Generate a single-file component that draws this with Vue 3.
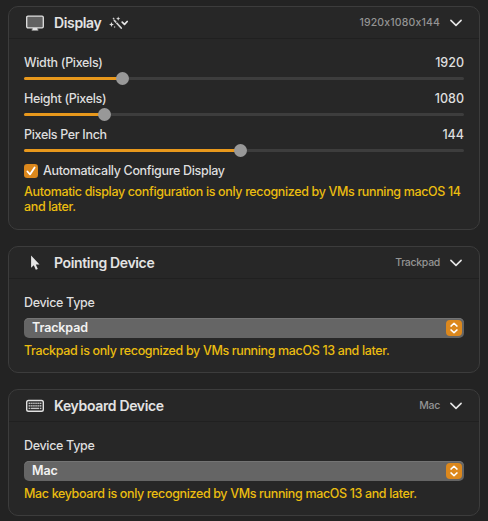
<script setup>
const sliders = [
  { label: 'Width (Pixels)', value: 1920, fill: 22.3 },
  { label: 'Height (Pixels)', value: 1080, fill: 18.2 },
  { label: 'Pixels Per Inch', value: 144, fill: 49.3 },
]
const devices = [
  { id: 'pointing', title: 'Pointing Device', value: 'Trackpad', note: 'Trackpad is only recognized by VMs running macOS 13 and later.' },
  { id: 'keyboard', title: 'Keyboard Device', value: 'Mac', note: 'Mac keyboard is only recognized by VMs running macOS 13 and later.' },
]
const keys = [0, 1, 2, 3, 4, 5, 6]
</script>

<template>
  <main class="page">
    <section class="card display">
      <header class="head">
        <svg class="icon" width="20" height="18" viewBox="0 0 20 18">
          <rect x="1.7" y="2.2" width="16.6" height="11.6" rx="1.2" fill="#626262" stroke="#e2e2e2" stroke-width="1.3" />
          <path d="M7.6 14h4.8v1.4h.9v1H6.7v-1h.9z" fill="#e2e2e2" />
        </svg>
        <h2>Display</h2>
        <svg class="wand" width="20" height="14" viewBox="0 0 20 14">
          <path d="M5.4 4.5l6.8 7.5" stroke="#d4d4d4" stroke-width="1.8" stroke-linecap="round" />
          <path d="M6.6 7.4l1.6-1.5" stroke="#272727" stroke-width=".6" />
          <path d="M9.2.6l.6 1.5 1.5.6-1.5.6-.6 1.5-.6-1.5-1.5-.6 1.5-.6zM2.5 6.1l.7 1.7 1.7.7-1.7.7-.7 1.7-.7-1.7-1.7-.7 1.7-.7zM5.7 9.8l.3.9.9.3-.9.3-.3.9-.3-.9-.9-.3.9-.3zM4.6 1.3l.4.9.9.4-.9.4-.4.9-.4-.9-.9-.4.9-.4z" fill="#dedede" />
          <path d="M13.2 6.2l2.3 2.2 2.7-2.9" fill="none" stroke="#e8e8e8" stroke-width="1.7" stroke-linecap="round" stroke-linejoin="round" />
        </svg>
        <span class="summary">1920x1080x144</span>
        <svg class="chev" width="14" height="10" viewBox="0 0 14 10"><path d="M1.9 2.4L7 7.4l5.1-5" /></svg>
      </header>
      <div class="body">
        <div v-for="s in sliders" :key="s.label" class="field">
          <div class="row">
            <span>{{ s.label }}</span>
            <span class="num">{{ s.value }}</span>
          </div>
          <div class="slider">
            <div class="track"><div class="fill" :style="{ width: s.fill + '%' }"><i class="knob"></i></div></div>
          </div>
        </div>
        <label class="check">
          <svg width="14" height="14" viewBox="0 0 14 14">
            <rect width="14" height="14" rx="3.2" fill="#dc881d" />
            <path d="M3.4 7.5l2.6 2.9 4.6-7" fill="none" stroke="#fff" stroke-width="1.8" stroke-linecap="round" stroke-linejoin="round" />
          </svg>
          <span>Automatically Configure Display</span>
        </label>
        <p class="note">Automatic display configuration is only recognized by VMs running macOS 14<br />and later.</p>
      </div>
    </section>

    <section v-for="d in devices" :key="d.id" class="card device" :class="d.id">
      <header class="head">
        <svg v-if="d.id === 'pointing'" class="icon" width="20" height="18" viewBox="0 0 20 18">
          <path d="M6.1 1.5v12.2l2.7-2.5 2 4.6 2-.9-2-4.4h3.7z" fill="#e6e6e6" />
        </svg>
        <svg v-else class="icon" width="20" height="18" viewBox="0 0 20 18">
          <rect x="1.7" y="3.5" width="16.6" height="10.8" rx="1.8" fill="none" stroke="#e2e2e2" stroke-width="1.4" />
          <g fill="#c4c4c4">
            <rect v-for="k in keys" :key="'a' + k" :x="3.6 + k * 1.9" y="5.6" width="1.4" height="1.5" />
            <rect v-for="k in keys" :key="'b' + k" :x="3.6 + k * 1.9" y="8.1" width="1.4" height="1.5" />
            <rect x="3.6" y="10.7" width="1.4" height="1.4" />
            <rect x="5.6" y="10.7" width="8.7" height="1.4" />
            <rect x="15" y="10.7" width="1.4" height="1.4" />
          </g>
        </svg>
        <h2>{{ d.title }}</h2>
        <span class="summary">{{ d.value }}</span>
        <svg class="chev" width="14" height="10" viewBox="0 0 14 10"><path d="M1.9 2.4L7 7.4l5.1-5" /></svg>
      </header>
      <div class="body">
        <div class="row">Device Type</div>
        <div class="select">
          <span>{{ d.value }}</span>
          <svg width="16" height="16" viewBox="0 0 16 16">
            <rect width="16" height="16" rx="4" fill="#dc881d" />
            <path d="M5 6.1l3-2.8 3 2.8M5 9.9l3 2.8 3-2.8" fill="none" stroke="#fff" stroke-width="1.5" stroke-linecap="round" stroke-linejoin="round" />
          </svg>
        </div>
        <p class="note">{{ d.note }}</p>
      </div>
    </section>
  </main>
</template>

<style>
body { margin: 0; background: #232323; }
</style>

<style scoped>
.page {
  box-sizing: border-box;
  height: 521px;
  padding: 6px 8px 0;
  display: flex;
  flex-direction: column;
  gap: 16px;
  background: #232323;
  color: #dedede;
  font: 450 12.5px/16px Inter, "Liberation Sans", sans-serif;
  font-feature-settings: "calt" 0;
  letter-spacing: -0.32px;
  overflow: hidden;
  white-space: nowrap;
}
.card {
  box-sizing: border-box;
  flex: none;
  border: 1px solid #3c3c3c;
  border-radius: 10px;
  background: #272727;
}
.display { height: 224px; }
.device { height: 127px; }
.head {
  box-sizing: border-box;
  height: 32px;
  display: flex;
  align-items: center;
  padding: 1px 16px 0;
  border-bottom: 1px solid #202020;
}
h2 { margin: 0 0 0 9px; font-size: 14px; font-weight: 600; line-height: 18px; letter-spacing: -0.35px; color: #e3e3e3; }
.wand { margin-left: 8px; }
.summary { margin-left: auto; font-size: 10.5px; font-weight: 500; letter-spacing: -0.3px; color: #949494; }
.display .summary { letter-spacing: 0.15px; }
.chev { margin-left: 9px; }
.chev path { fill: none; stroke: #e6e6e6; stroke-width: 1.6; stroke-linecap: round; stroke-linejoin: round; }
.body { padding: 16px 15px 0; }
.row { height: 16px; display: flex; justify-content: space-between; }
.num { font-weight: 500; letter-spacing: 0; }
.field { margin-bottom: 5px; }
.slider { height: 15px; display: flex; align-items: center; }
.track { width: 100%; height: 3px; border-radius: 2px; background: #3d3d3d; }
.fill { height: 3px; border-radius: 2px; background: #e8981c; display: flex; justify-content: flex-end; align-items: center; }
.knob { flex: none; width: 13px; height: 13px; margin-right: -6.5px; border-radius: 50%; background: #989898; }
.check { display: flex; align-items: center; height: 16px; gap: 5px; }
.note { margin: 5px 0 0; line-height: 15px; font-weight: 500; letter-spacing: -0.355px; color: #ebbd10; }
.select {
  box-sizing: border-box;
  height: 20px;
  margin-top: 7px;
  padding: 0 2px 0 8px;
  display: flex;
  align-items: center;
  justify-content: space-between;
  border-radius: 5px;
  background: #656565;
  box-shadow: inset 0 1px 0 #747474;
  color: #f2f2f2;
  font-weight: 600;
  letter-spacing: -0.12px;
}
</style>
